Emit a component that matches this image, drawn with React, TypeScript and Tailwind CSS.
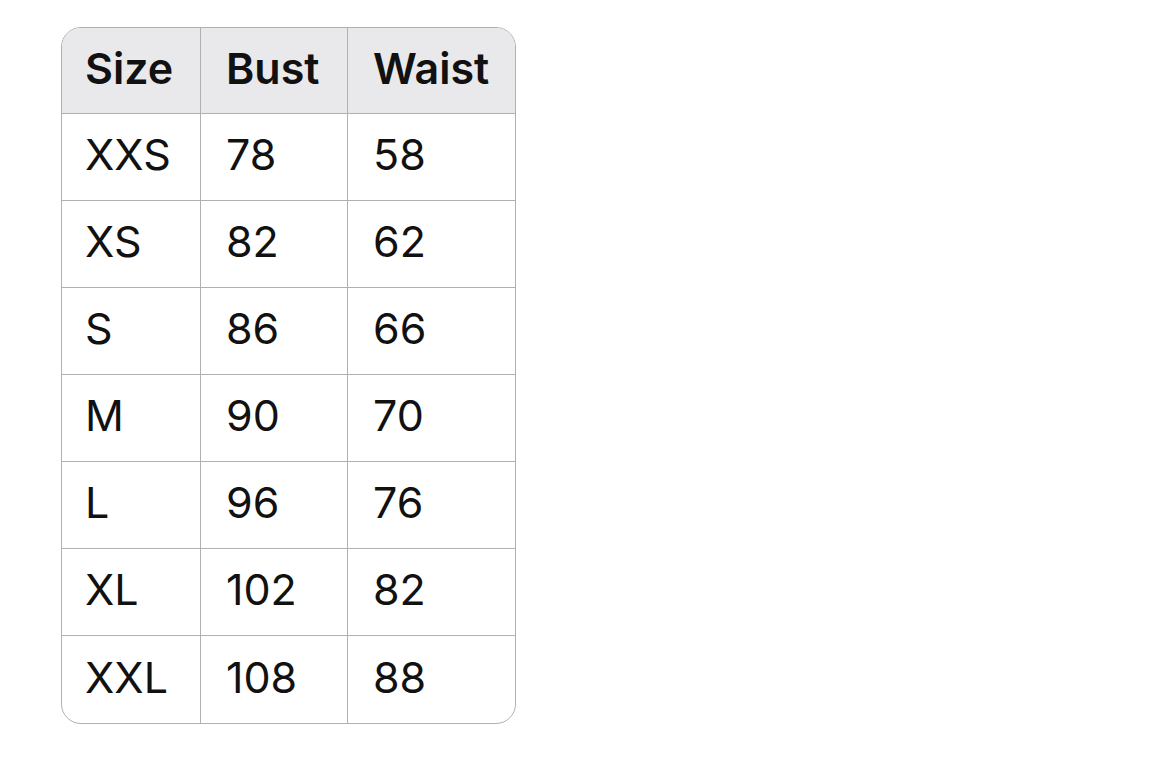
const rows = [
  ["XXS", "78", "58"],
  ["XS", "82", "62"],
  ["S", "86", "66"],
  ["M", "90", "70"],
  ["L", "96", "76"],
  ["XL", "102", "82"],
  ["XXL", "108", "88"],
];

const cellCls = [
  "w-[139px] pl-[23px] border-r border-[#b0b0b0]",
  "w-[147px] pl-[25px] border-r border-[#b0b0b0]",
  "w-[167px] pl-[25px]",
];

export default function App() {
  return (
    <div className="min-h-screen bg-white pl-[61px] pt-[27px] font-['Inter',sans-serif] text-[43px] text-[#111]">
      <div className="w-[455px] overflow-hidden rounded-[20px] border border-[#b0b0b0]">
        <div className="flex h-[86px] border-b border-[#b0b0b0] bg-[#e9e9eb] font-semibold">
          {["Size", "Bust", "Waist"].map((h, i) => (
            <div key={h} className={`${cellCls[i]} flex items-center pb-[5px]`}>
              {h}
            </div>
          ))}
        </div>
        {rows.map((r, ri) => (
          <div
            key={r[0]}
            className={`flex h-[87px] ${ri < rows.length - 1 ? "border-b border-[#b0b0b0]" : ""}`}
          >
            {r.map((c, i) => (
              <div key={i} className={`${cellCls[i]} flex items-center pb-[5px]`}>
                {c}
              </div>
            ))}
          </div>
        ))}
      </div>
    </div>
  );
}
